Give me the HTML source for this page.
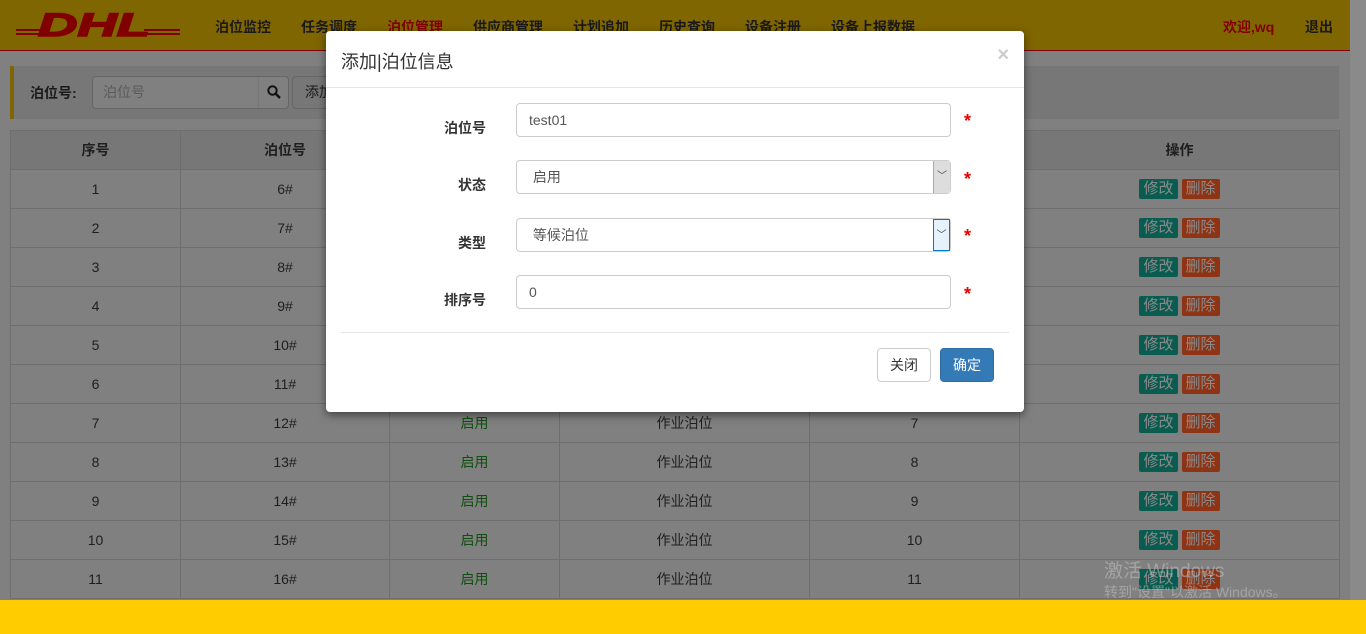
<!DOCTYPE html>
<html><head><meta charset="utf-8"><style>
*{box-sizing:border-box;margin:0;padding:0}
body{width:1366px;height:634px;overflow:hidden;background:#808080;font-family:"Liberation Sans","Noto Sans CJK SC",sans-serif;font-size:14px;color:#1a1a1a;position:relative}
.hdr{position:absolute;left:0;top:0;width:1350px;height:51px;background:#806600;border-bottom:1px solid #800000}
.nav{position:absolute;top:17px;font-size:14px;font-weight:bold;color:#1a1a1a}
.sb{position:absolute;left:1350px;top:0;width:16px;height:600px;background:#8a8a8a}
.search{position:absolute;left:10px;top:66px;width:1329px;height:53px;background:#777;border-left:4px solid #806600}
.tbl{position:absolute;left:10px;top:130px;border-collapse:collapse}
.tbl td{border:1px solid #6e6e6e;height:39px;text-align:center;font-size:14px;color:#1e1e1e}
.tbl tr:first-child td{background:#777;font-weight:bold}
.tbl td.g{color:#0f4f0f}
.b1,.b2{display:inline-block;padding:0 4px;height:20px;line-height:20px;border-radius:2px;color:#8a8a8a;font-size:15px}
.b1{background:#0b5c50}.b2{background:#8e3414;margin-left:4px}
.foot{position:absolute;left:0;top:600px;width:1366px;height:34px;background:#ffcc00}
.modal{position:absolute;left:326px;top:31px;width:698px;height:381px;background:#fff;border-radius:4px;box-shadow:0 3px 9px rgba(0,0,0,.5)}
.mt{position:absolute;left:15px;top:17px;font-size:18px;color:#333}
.x{position:absolute;right:15px;top:13px;font-size:20px;color:#ccc;font-weight:bold}
.lbl{position:absolute;width:160px;left:0;text-align:right;font-weight:bold;font-size:14px;color:#333}
.inp{position:absolute;left:190px;width:435px;height:34px;border:1px solid #ccc;border-radius:4px;padding:0 12px;line-height:32px;font-size:14px;color:#555}
.ar{position:absolute;right:0;top:0;width:17px;height:32px;border-left:1px solid #aaa;background:#ddd;font-size:10px;text-align:center;line-height:32px;color:#444}
.st{position:absolute;left:638px;color:#e00;font-weight:bold;font-size:18px}
.btn{position:absolute;top:317px;height:34px;width:54px;border-radius:4px;text-align:center;line-height:32px;font-size:14px}
.wm{position:absolute;left:1104px;color:rgba(200,200,200,.5)}
</style></head><body>
<div class="hdr">
<svg style="position:absolute;left:16px;top:12px" width="164" height="26" viewBox="0 0 164 26"><g fill="#800000"><rect x="0" y="17" width="26" height="2"/><rect x="0" y="21" width="26" height="2"/><rect x="128" y="17" width="36" height="2"/><rect x="128" y="21" width="36" height="2"/>
<text x="22" y="24" font-family="Liberation Sans" font-style="italic" font-weight="bold" font-size="32" textLength="112" lengthAdjust="spacingAndGlyphs" fill="#800000" stroke="#800000" stroke-width="1.5">DHL</text></g></svg>
<span class="nav" style="left:215px">泊位监控</span><span class="nav" style="left:301px">任务调度</span><span class="nav" style="left:387px;color:#800000">泊位管理</span><span class="nav" style="left:473px">供应商管理</span><span class="nav" style="left:573px">计划追加</span><span class="nav" style="left:659px">历史查询</span><span class="nav" style="left:745px">设备注册</span><span class="nav" style="left:831px">设备上报数据</span><span class="nav" style="left:1223px;color:#800000">欢迎,wq</span><span class="nav" style="left:1305px">退出</span>
</div>
<div class="sb"></div>
<div class="search">
<span style="position:absolute;left:16px;top:17px;font-weight:bold">泊位号:</span>
<div style="position:absolute;left:78px;top:10px;width:197px;height:33px;border:1px solid #666;border-radius:4px;background:#808080;color:#5a5a5a;padding:0 10px;line-height:31px">泊位号<span style="position:absolute;right:0;top:0;width:30px;height:31px;border-left:1px solid #777"><svg style="position:absolute;left:8px;top:8px" width="14" height="14" viewBox="0 0 14 14"><circle cx="5.5" cy="5.5" r="4.2" fill="none" stroke="#111" stroke-width="2"/><line x1="8.6" y1="8.6" x2="13" y2="13" stroke="#111" stroke-width="2.4"/></svg></span></div>
<div style="position:absolute;left:278px;top:10px;width:60px;height:33px;border:1px solid #666;border-radius:4px;padding:0 12px;line-height:31px">添加</div>
</div>
<table class="tbl">
<tr><td style="width:170px">序号</td><td style="width:209px">泊位号</td><td style="width:170px">状态</td><td style="width:250px">类型</td><td style="width:210px">排序号</td><td style="width:320px">操作</td></tr>
<tr><td>1</td><td>6#</td><td class="g">启用</td><td>作业泊位</td><td>1</td><td><span class="b1">修改</span><span class="b2">删除</span></td></tr>
<tr><td>2</td><td>7#</td><td class="g">启用</td><td>作业泊位</td><td>2</td><td><span class="b1">修改</span><span class="b2">删除</span></td></tr>
<tr><td>3</td><td>8#</td><td class="g">启用</td><td>作业泊位</td><td>3</td><td><span class="b1">修改</span><span class="b2">删除</span></td></tr>
<tr><td>4</td><td>9#</td><td class="g">启用</td><td>作业泊位</td><td>4</td><td><span class="b1">修改</span><span class="b2">删除</span></td></tr>
<tr><td>5</td><td>10#</td><td class="g">启用</td><td>作业泊位</td><td>5</td><td><span class="b1">修改</span><span class="b2">删除</span></td></tr>
<tr><td>6</td><td>11#</td><td class="g">启用</td><td>作业泊位</td><td>6</td><td><span class="b1">修改</span><span class="b2">删除</span></td></tr>
<tr><td>7</td><td>12#</td><td class="g">启用</td><td>作业泊位</td><td>7</td><td><span class="b1">修改</span><span class="b2">删除</span></td></tr>
<tr><td>8</td><td>13#</td><td class="g">启用</td><td>作业泊位</td><td>8</td><td><span class="b1">修改</span><span class="b2">删除</span></td></tr>
<tr><td>9</td><td>14#</td><td class="g">启用</td><td>作业泊位</td><td>9</td><td><span class="b1">修改</span><span class="b2">删除</span></td></tr>
<tr><td>10</td><td>15#</td><td class="g">启用</td><td>作业泊位</td><td>10</td><td><span class="b1">修改</span><span class="b2">删除</span></td></tr>
<tr><td>11</td><td>16#</td><td class="g">启用</td><td>作业泊位</td><td>11</td><td><span class="b1">修改</span><span class="b2">删除</span></td></tr>
</table>
<div class="wm" style="top:556px;font-size:19px">激活 Windows</div>
<div class="wm" style="top:582px;font-size:14px">转到"设置"以激活 Windows。</div>
<div class="foot"></div>
<div class="modal">
<div class="mt">添加|泊位信息</div><div class="x">×</div>
<div style="position:absolute;left:0;top:56px;width:698px;border-top:1px solid #e5e5e5"></div>
<div class="lbl" style="top:87px">泊位号</div><div class="inp" style="top:72px">test01</div><div class="st" style="top:80px">*</div>
<div class="lbl" style="top:144px">状态</div><div class="inp" style="top:129px">&nbsp;启用<div class="ar">﹀</div></div><div class="st" style="top:138px">*</div>
<div class="lbl" style="top:202px">类型</div><div class="inp" style="top:187px">&nbsp;等候泊位<div class="ar" style="background:#e5f1fb;border:1px solid #0078d7">﹀</div></div><div class="st" style="top:195px">*</div>
<div class="lbl" style="top:259px">排序号</div><div class="inp" style="top:244px">0</div><div class="st" style="top:253px">*</div>
<div style="position:absolute;left:15px;top:301px;width:668px;border-top:1px solid #e5e5e5"></div>
<div class="btn" style="left:551px;border:1px solid #ccc;color:#333">关闭</div>
<div class="btn" style="left:614px;background:#337ab7;border:1px solid #2e6da4;color:#fff">确定</div>
</div>
</body></html>
